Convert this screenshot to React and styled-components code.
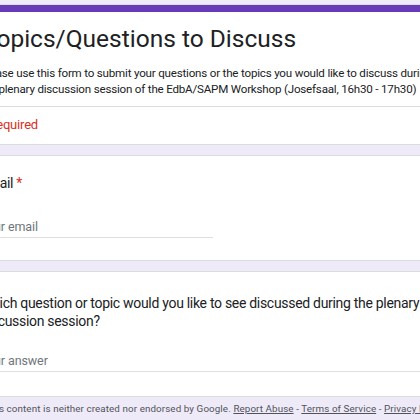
import styled, { createGlobalStyle } from "styled-components"

const GlobalStyle = createGlobalStyle`
  html, body {
    margin: 0;
    padding: 0;
    background: #efeaf8;
    overflow: hidden;
  }
  body {
    font-family: Roboto, "Liberation Sans", sans-serif;
    color: #202124;
  }
`;

const Page = styled.div`
  width: 420px;
  height: 420px;
  overflow: hidden;
  padding-top: 4px;
  box-sizing: border-box;
`;

const Column = styled.div`
  margin-left: -45px;
  width: 504px;
  display: flex;
  flex-direction: column;
  gap: 10px;
`;

const Card = styled.div`
  background: #fff;
  border: 1px solid #dadce0;
  border-radius: 8px;
  overflow: hidden;
`;

const AccentBar = styled.div`
  height: 8px;
  margin-top: -1px;
  background: #673ab7;
`;

const HeaderBody = styled.div`
  padding: 11px 24px 0 24px;
`;

const FormTitle = styled.h1`
  margin: 0 0 0 3px;
  font-family: Roboto, "Open Sans", sans-serif;
  font-weight: 400;
  font-size: 24.5px;
  line-height: 32px;
  color: #202124;
`;

const Description = styled.p`
  margin: 10px 0 0 0;
  padding-bottom: 9px;
  font-size: 11.6px;
  letter-spacing: -0.2px;
  line-height: 16px;
  color: #202124;
`;

const Divider = styled.div`
  border-top: 1px solid #dadce0;
  margin: 0 -24px;
`;

const RequiredNote = styled.div`
  padding: 9px 0 10px 0;
  font-size: 13px;
  letter-spacing: -0.2px;
  line-height: 18px;
  color: #d93025;
`;

const QuestionBody = styled.div`
  padding: ${p => p.$top}px 24px ${p => p.$bottom}px 24px;
`;

const Label = styled.div`
  font-size: 14px;
  letter-spacing: -0.3px;
  line-height: ${p => p.$lh || 19}px;
  color: #202124;
`;

const Star = styled.span`
  color: #d93025;
`;

const Input = styled.div`
  margin-top: ${p => p.$top}px;
  width: ${p => p.$width};
  border-bottom: 1px solid #e0e0e0;
  padding-bottom: 2px;
  font-size: 12.5px;
  letter-spacing: -0.1px;
  line-height: 17px;
  color: #70757a;
`;

const Footer = styled.div`
  margin-top: -6px;
  padding: 0 24px 0 30px;
  font-size: 9.8px;
  letter-spacing: 0.1px;
  line-height: 16px;
  color: #50545a;
  white-space: nowrap;
`;

const FooterLink = styled.a`
  color: #50545a;
  text-decoration: underline;
`;

export default function App(){
  return(
    <Page>
      <GlobalStyle />
      <Column>
        <Card>
          <AccentBar />
          <HeaderBody>
            <FormTitle>Topics/Questions to Discuss</FormTitle>
            <Description>
              Please use this form to submit your questions or the topics you would like to discuss during the plenary discussion session of the EdbA/SAPM Workshop (Josefsaal, 16h30 - 17h30)
            </Description>
            <Divider />
            <RequiredNote>* Required</RequiredNote>
          </HeaderBody>
        </Card>
        <Card>
          <QuestionBody $top={18} $bottom={22}>
            <Label>Email <Star>*</Star></Label>
            <Input $top={25} $width="233px">Your email</Input>
          </QuestionBody>
        </Card>
        <Card>
          <QuestionBody $top={22} $bottom={24}>
            <Label $lh={18}>Which question or topic would you like to see discussed during the plenary discussion session?</Label>
            <Input $top={22} $width="100%">Your answer</Input>
          </QuestionBody>
        </Card>
        <Footer>
          This content is neither created nor endorsed by Google. <FooterLink>Report Abuse</FooterLink> - <FooterLink>Terms of Service</FooterLink> - <FooterLink>Privacy Policy</FooterLink>
        </Footer>
      </Column>
    </Page>
  )
}
